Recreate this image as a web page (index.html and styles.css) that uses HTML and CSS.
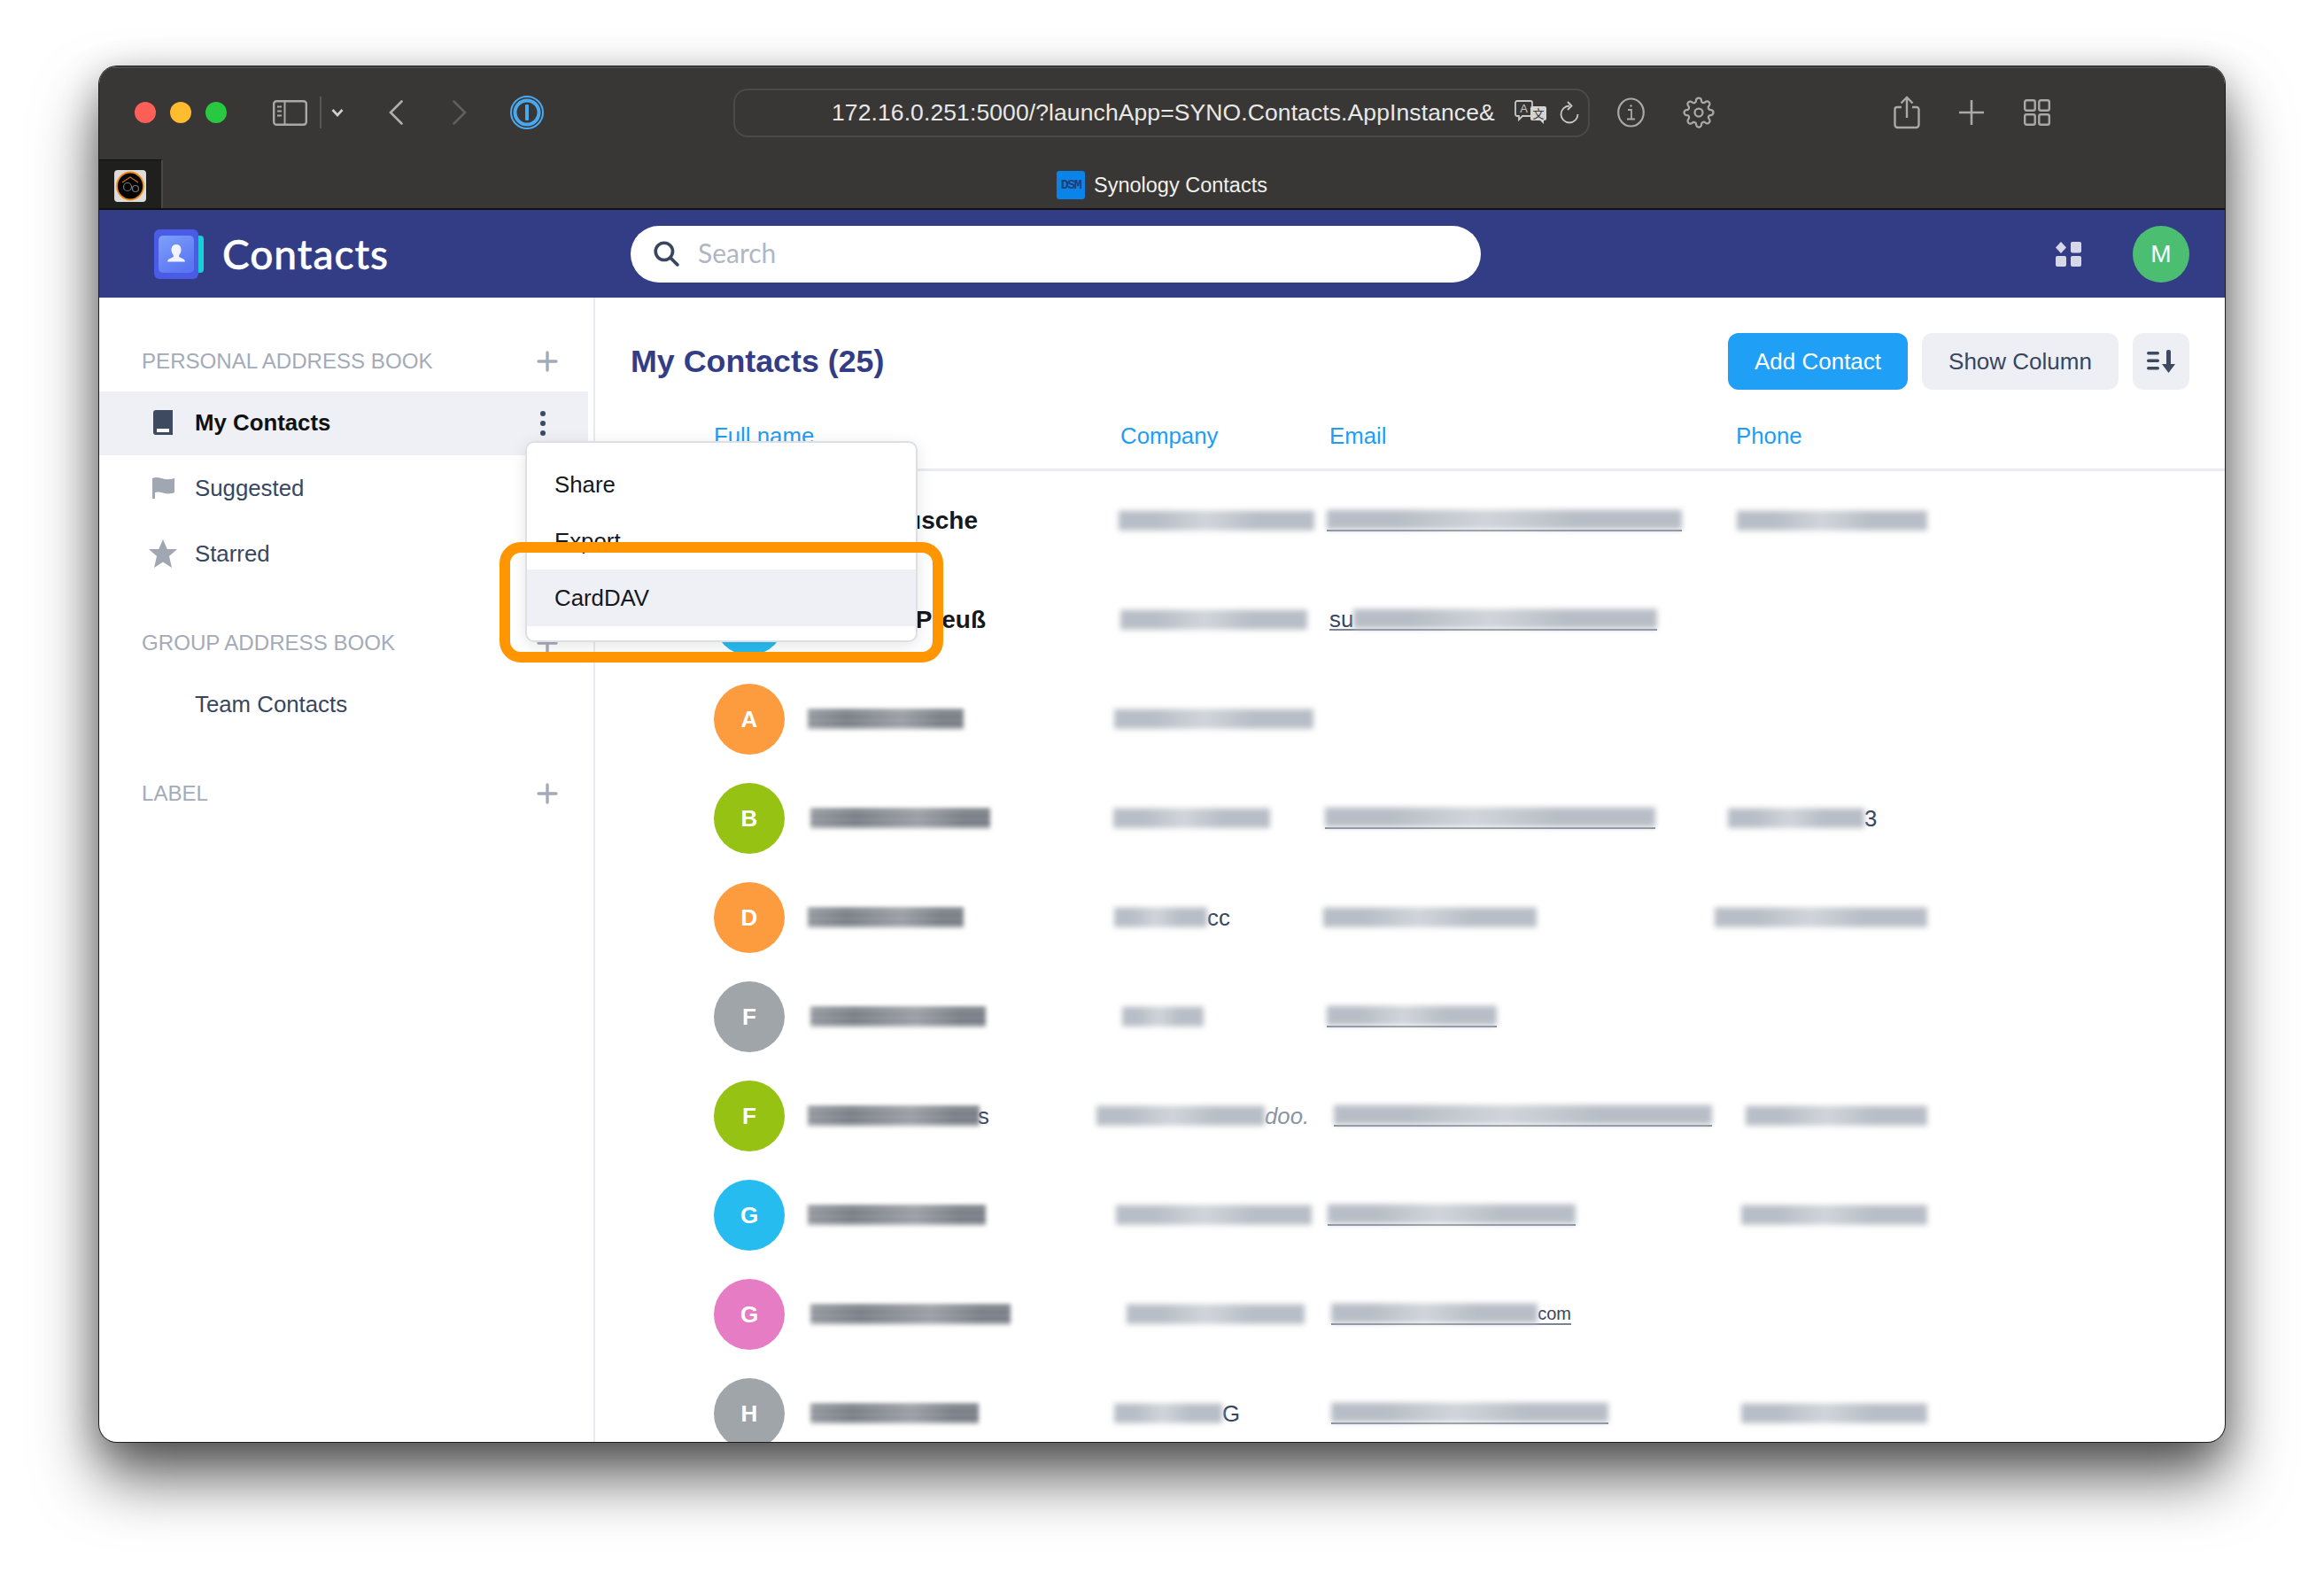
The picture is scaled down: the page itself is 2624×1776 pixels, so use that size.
FILE: index.html
```html
<!DOCTYPE html>
<html lang="en">
<head>
    <meta charset="UTF-8">
    <title>Synology Contacts</title>
    <link rel="stylesheet" href="styles.css">
</head>
<body>
    <div class="window">
        <div class="toolbar">
            <span class="light red"></span>
            <span class="light yellow"></span>
            <span class="light green"></span>

            <svg class="tb-sidebar" width="39" height="29" viewBox="0 0 39 29" fill="none" stroke="#a9a9a7" stroke-width="2.4">
                <rect x="1.2" y="1.2" width="36.6" height="26.6" rx="3"/>
                <path d="M13.5 1v27M5 7.5h5M5 12.5h5M5 17.5h5" stroke-width="2"/>
            </svg>
            <span class="tb-sep"></span>
            <svg class="tb-chevron" width="14" height="10" viewBox="0 0 14 10" fill="none" stroke="#d0d0ce" stroke-width="2.6">
                <path d="M1.5 2l5.5 6 5.5-6"/>
            </svg>
            <svg class="tb-back" width="16" height="28" viewBox="0 0 16 28" fill="none" stroke="#aeaeac" stroke-width="2.6" stroke-linecap="round">
                <path d="M14.5 1.5L2 14l12.5 12.5"/>
            </svg>
            <svg class="tb-forward" width="16" height="28" viewBox="0 0 16 28" fill="none" stroke="#5f5f5d" stroke-width="2.6" stroke-linecap="round">
                <path d="M1.5 1.5L14 14 1.5 26.5"/>
            </svg>
            <svg class="tb-onepass" width="38" height="38" viewBox="0 0 38 38">
                <circle cx="19" cy="19" r="18" fill="none" stroke="#4aa8ee" stroke-width="2"/>
                <circle cx="19" cy="19" r="13.5" fill="none" stroke="#4aa8ee" stroke-width="4"/>
                <rect x="17" y="10" width="4" height="18" rx="1" fill="#4aa8ee"/>
            </svg>

            <div class="urlbar">
                <span class="url">172.16.0.251:5000/?launchApp=SYNO.Contacts.AppInstance&amp;</span>
                <svg class="tb-translate" width="37" height="28" viewBox="0 0 37 28">
                    <path d="M3 1h15a2 2 0 0 1 2 2v13a2 2 0 0 1-2 2H9l-4 4v-4H3a2 2 0 0 1-2-2V3a2 2 0 0 1 2-2z" fill="#383735" stroke="#c8c8c6" stroke-width="1.8"/>
                    <text x="10.5" y="14" class="tr-latin">A</text>
                    <path d="M20 7h14a2 2 0 0 1 2 2v12a2 2 0 0 1-2 2h-1v4l-4-4h-9a2 2 0 0 1-2-2V9a2 2 0 0 1 2-2z" fill="#d4d4d2"/>
                    <text x="27" y="20" class="tr-cjk">文</text>
                </svg>
                <svg class="tb-reload" width="22" height="26" viewBox="0 0 22 26" fill="none" stroke="#c8c8c6" stroke-width="1.8">
                    <path d="M11 5.5a9.5 9.5 0 1 0 9.5 9.5"/>
                    <path d="M9 1l4.5 4.5L9 10"/>
                </svg>
            </div>

            <svg class="tb-info" width="31" height="34" viewBox="0 0 31 34" fill="none" stroke="#a9a9a7" stroke-width="2.2">
                <ellipse cx="15.5" cy="17" rx="14.3" ry="15.5"/>
                <path d="M12 14h4v10M11 24.5h9" stroke-width="1.8"/>
                <circle cx="15.5" cy="9.5" r="1.2" fill="#a9a9a7" stroke="none"/>
            </svg>
            <svg class="tb-gear" width="36" height="36" viewBox="0 0 24 24" fill="none" stroke="#a9a9a7" stroke-width="1.5">
                <circle cx="12" cy="12" r="3"/>
                <path d="M19.4 15a1.65 1.65 0 0 0 .33 1.82l.06.06a2 2 0 0 1 0 2.83 2 2 0 0 1-2.83 0l-.06-.06a1.65 1.65 0 0 0-1.82-.33 1.65 1.65 0 0 0-1 1.51V21a2 2 0 0 1-2 2 2 2 0 0 1-2-2v-.09A1.65 1.65 0 0 0 9 19.4a1.65 1.65 0 0 0-1.82.33l-.06.06a2 2 0 0 1-2.83 0 2 2 0 0 1 0-2.83l.06-.06a1.65 1.65 0 0 0 .33-1.82 1.65 1.65 0 0 0-1.51-1H3a2 2 0 0 1-2-2 2 2 0 0 1 2-2h.09A1.65 1.65 0 0 0 4.6 9a1.65 1.65 0 0 0-.33-1.82l-.06-.06a2 2 0 0 1 0-2.83 2 2 0 0 1 2.83 0l.06.06a1.65 1.65 0 0 0 1.82.33H9a1.65 1.65 0 0 0 1-1.51V3a2 2 0 0 1 2-2 2 2 0 0 1 2 2v.09a1.65 1.65 0 0 0 1 1.51 1.65 1.65 0 0 0 1.82-.33l.06-.06a2 2 0 0 1 2.83 0 2 2 0 0 1 0 2.83l-.06.06a1.65 1.65 0 0 0-.33 1.82V9a1.65 1.65 0 0 0 1.51 1H21a2 2 0 0 1 2 2 2 2 0 0 1-2 2h-.09a1.65 1.65 0 0 0-1.51 1z"/>
            </svg>
            <svg class="tb-share" width="30" height="38" viewBox="0 0 30 38" fill="none" stroke="#a9a9a7" stroke-width="2.4">
                <path d="M9 13H4a2.5 2.5 0 0 0-2.5 2.5V33A3 3 0 0 0 4.5 36h21a3 3 0 0 0 3-3V15.5A2.5 2.5 0 0 0 26 13h-5"/>
                <path d="M15 25V2M8.5 8.5L15 2l6.5 6.5"/>
            </svg>
            <svg class="tb-plus" width="28" height="28" viewBox="0 0 28 28" fill="none" stroke="#a9a9a7" stroke-width="2.6">
                <path d="M14 0v28M0 14h28"/>
            </svg>
            <svg class="tb-tabs" width="30" height="30" viewBox="0 0 30 30" fill="none" stroke="#a9a9a7" stroke-width="2.4">
                <rect x="1.2" y="1.2" width="11.5" height="11.5" rx="2"/>
                <rect x="17.3" y="1.2" width="11.5" height="11.5" rx="2"/>
                <rect x="1.2" y="17.3" width="11.5" height="11.5" rx="2"/>
                <rect x="17.3" y="17.3" width="11.5" height="11.5" rx="2"/>
            </svg>
        </div>

        <div class="tabbar">
            <div class="pinned-tab">
                <svg class="pinned-icon" width="36" height="36" viewBox="0 0 36 36">
                    <rect width="36" height="36" rx="4" fill="#dedcd8"/>
                    <ellipse cx="18" cy="18" rx="15" ry="15.5" fill="#050505" stroke="#f08a10" stroke-width="1.8"/>
                    <path d="M9 14l9-6 9 6" fill="none" stroke="#c06a18" stroke-width="1.2"/>
                    <circle cx="15" cy="19" r="4.5" fill="none" stroke="#777" stroke-width="1.2"/>
                    <circle cx="24" cy="21" r="3.5" fill="none" stroke="#777" stroke-width="1.2"/>
                </svg>
            </div>
            <div class="tab-title">
                <span class="dsm"><span class="dsm-text">DSM</span></span>
                <span>Synology Contacts</span>
            </div>
        </div>

        <header class="appbar">
            <div class="brand">
                <svg class="brand-logo" width="56" height="56" viewBox="0 0 56 56">
                    <defs>
                        <linearGradient id="logoFace" x1="0" y1="0" x2="0.6" y2="1">
                            <stop offset="0" stop-color="#7fa0fa"/>
                            <stop offset="1" stop-color="#5a76f2"/>
                        </linearGradient>
                    </defs>
                    <rect x="40" y="7" width="16" height="42" rx="4" fill="#19cfd6"/>
                    <rect width="50" height="56" rx="6" fill="#4a5ce6"/>
                    <rect x="5" y="7" width="40" height="42" rx="5" fill="url(#logoFace)"/>
                    <path d="M25 17c3.5 0 5.5 2.6 5.5 6 0 2.8-1.1 4.6-2.3 6v2c2 1.3 6.3 2 6.8 5.5H15c.5-3.5 4.800-4.200 6.800-5.500v-2c-1.200-1.400-2.300-3.200-2.300-6 0-3.400 2-6 5.500-6z" fill="#f2f5ff"/>
                </svg>
                <span class="brand-name">Contacts</span>
            </div>
            <div class="search">
                <svg width="30" height="30" viewBox="0 0 28 28" fill="none" stroke="#38465f" stroke-width="3.4" stroke-linecap="round">
                    <circle cx="12" cy="12" r="9"/>
                    <path d="M19 19l7 7"/>
                </svg>
                <span>Search</span>
            </div>
            <svg class="appbar-grid" width="31" height="28" viewBox="0 0 31 28" fill="#d6d8ea">
                <path d="M7 0l6 6.500-6 6.500-6-6.500z"/>
                <rect x="18" y="0" width="12" height="12.500" rx="2"/>
                <rect x="1" y="16" width="12" height="12" rx="2"/>
                <rect x="18" y="16" width="12" height="12" rx="2"/>
            </svg>
            <span class="user">M</span>
        </header>

        <div class="content">
            <aside class="sidebar">
                <div class="side-head">
                    <span>PERSONAL ADDRESS BOOK</span>
                    <svg class="side-plus" width="24" height="24" viewBox="0 0 24 24" fill="none" stroke="#a4abb8" stroke-width="3.4" stroke-linecap="round"><path d="M12 2v20M2 12h20"/></svg>
                </div>
                <div class="side-row selected">
                    <span class="side-icon">
                        <svg width="22" height="28" viewBox="0 0 22 28"><path d="M3 0h19v28H3a3 3 0 0 1-3-3V3a3 3 0 0 1 3-3z" fill="#3d4a60"/><rect x="4" y="21" width="14" height="4" fill="#fff"/></svg>
                    </span>
                    <span>My Contacts</span>
                    <span class="dots"><i></i><i></i><i></i></span>
                </div>
                <div class="side-row">
                    <span class="side-icon">
                        <svg width="25" height="24" viewBox="0 0 25 24" fill="#a0a6b2"><path d="M0 1c5-2 8-.5 12 .5s8 1 13-.5v16c-5 2-9 1.500-13 .5s-6-1.500-9-.5v6.500a1.500 1.500 0 0 1-3 0z"/></svg>
                    </span>
                    <span>Suggested</span>
                </div>
                <div class="side-row">
                    <span class="side-icon">
                        <svg width="32" height="32" viewBox="0 0 32 32" fill="#a0a6b2"><path d="M16 0l4.800 11H32l-9 8 3 13-10-6.500L6 32l3-13-9-8h11.200z"/></svg>
                    </span>
                    <span>Starred</span>
                </div>

                <div class="side-head">
                    <span>GROUP ADDRESS BOOK</span>
                    <svg class="side-plus" width="24" height="24" viewBox="0 0 24 24" fill="none" stroke="#a4abb8" stroke-width="3.4" stroke-linecap="round"><path d="M12 2v20M2 12h20"/></svg>
                </div>
                <div class="side-row">
                    <span class="side-icon"></span>
                    <span>Team Contacts</span>
                </div>

                <div class="side-head">
                    <span>LABEL</span>
                    <svg class="side-plus" width="24" height="24" viewBox="0 0 24 24" fill="none" stroke="#a4abb8" stroke-width="3.4" stroke-linecap="round"><path d="M12 2v20M2 12h20"/></svg>
                </div>
            </aside>

            <main class="main">
                <div class="main-head">
                    <h1>My Contacts (25)</h1>
                    <div class="actions">
                        <button class="btn primary" type="button">Add Contact</button>
                        <button class="btn" type="button">Show Column</button>
                        <button class="btn sort" type="button">
                            <svg width="33" height="26" viewBox="0 0 33 26" fill="#3d4a60">
                                <rect x="0" y="2" width="14" height="3.5" rx="1.7"/>
                                <rect x="0" y="10.5" width="14" height="3.5" rx="1.7"/>
                                <rect x="0" y="19" width="14" height="3.5" rx="1.7"/>
                                <rect x="22" y="0" width="5" height="18" rx="2"/>
                                <path d="M17 16h15l-7.5 10z"/>
                            </svg>
                        </button>
                    </div>
                </div>

                <div class="columns">
                    <span>Full name</span>
                    <span>Company</span>
                    <span>Email</span>
                    <span>Phone</span>
                </div>

                <div class="row">
                    <div class="person">
                        <span class="avatar cyan"></span>
                        <span class="name-end" style="width:190px">usche</span>
                    </div>
                    <div class="cell"><span class="smear" style="width:221px;margin-left:-2px"></span></div>
                    <div class="cell"><span class="mail" style="width:401px;margin-left:-3px"><span class="smear"></span></span></div>
                    <div class="cell"><span class="smear" style="width:215px;margin-left:1px"></span></div>
                </div>
                <div class="row">
                    <div class="person">
                        <span class="avatar cyan"></span>
                        <span class="name-end" style="width:199px">Preuß</span>
                    </div>
                    <div class="cell"><span class="smear" style="width:211px"></span></div>
                    <div class="cell"><span class="mail" style="width:370px"><span class="left-over">su</span><span class="smear"></span></span></div>
                    <div class="cell"></div>
                </div>
                <div class="row">
                    <div class="person">
                        <span class="avatar orange">A</span>
                        <span class="smear dark" style="width:176px;margin-left:-2px"></span>
                    </div>
                    <div class="cell"><span class="smear" style="width:225px;margin-left:-7px"></span></div>
                    <div class="cell"></div>
                    <div class="cell"></div>
                </div>
                <div class="row">
                    <div class="person">
                        <span class="avatar lime">B</span>
                        <span class="smear dark" style="width:203px;margin-left:1px"></span>
                    </div>
                    <div class="cell"><span class="smear" style="width:177px;margin-left:-8px"></span></div>
                    <div class="cell"><span class="mail" style="width:373px;margin-left:-5px"><span class="smear"></span></span></div>
                    <div class="cell"><span class="smear" style="width:154px;margin-left:-9px"></span><span class="left-over">3</span></div>
                </div>
                <div class="row">
                    <div class="person">
                        <span class="avatar orange">D</span>
                        <span class="smear dark" style="width:176px;margin-left:-2px"></span>
                    </div>
                    <div class="cell"><span class="smear" style="width:105px;margin-left:-7px"></span><span class="left-over">cc</span></div>
                    <div class="cell"><span class="smear" style="width:241px;margin-left:-7px"></span></div>
                    <div class="cell"><span class="smear" style="width:240px;margin-left:-24px"></span></div>
                </div>
                <div class="row">
                    <div class="person">
                        <span class="avatar gray">F</span>
                        <span class="smear dark" style="width:198px;margin-left:1px"></span>
                    </div>
                    <div class="cell"><span class="smear" style="width:92px;margin-left:2px"></span></div>
                    <div class="cell"><span class="mail" style="width:192px;margin-left:-3px"><span class="smear"></span></span></div>
                    <div class="cell"></div>
                </div>
                <div class="row">
                    <div class="person">
                        <span class="avatar lime">F</span>
                        <span class="smear dark" style="width:194px;margin-left:-2px"></span><span class="left-over tail">s</span>
                    </div>
                    <div class="cell"><span class="smear" style="width:190px;margin-left:-27px"></span><span class="left-over italic">doo.</span></div>
                    <div class="cell"><span class="mail" style="width:427px;margin-left:5px"><span class="smear"></span></span></div>
                    <div class="cell"><span class="smear" style="width:205px;margin-left:11px"></span></div>
                </div>
                <div class="row">
                    <div class="person">
                        <span class="avatar cyan">G</span>
                        <span class="smear dark" style="width:201px;margin-left:-2px"></span>
                    </div>
                    <div class="cell"><span class="smear" style="width:221px;margin-left:-5px"></span></div>
                    <div class="cell"><span class="mail" style="width:280px;margin-left:-2px"><span class="smear"></span></span></div>
                    <div class="cell"><span class="smear" style="width:210px;margin-left:6px"></span></div>
                </div>
                <div class="row">
                    <div class="person">
                        <span class="avatar pink">G</span>
                        <span class="smear dark" style="width:226px;margin-left:1px"></span>
                    </div>
                    <div class="cell"><span class="smear" style="width:201px;margin-left:7px"></span></div>
                    <div class="cell"><span class="mail" style="width:271px;margin-left:2px"><span class="smear"></span><span class="left-over small">com</span></span></div>
                    <div class="cell"></div>
                </div>
                <div class="row">
                    <div class="person">
                        <span class="avatar gray">H</span>
                        <span class="smear dark" style="width:190px;margin-left:1px"></span>
                    </div>
                    <div class="cell"><span class="smear" style="width:122px;margin-left:-7px"></span><span class="left-over">G</span></div>
                    <div class="cell"><span class="mail" style="width:313px;margin-left:2px"><span class="smear"></span></span></div>
                    <div class="cell"><span class="smear" style="width:210px;margin-left:6px"></span></div>
                </div>
            </main>
        </div>

        <div class="menu">
            <div class="menu-item">Share</div>
            <div class="menu-item">Export</div>
            <div class="menu-item hover">CardDAV</div>
        </div>
        <div class="callout"></div>
    </div>
</body>
</html>
```

FILE: styles.css
```css
* {
    box-sizing: border-box;
}

body {
    margin: 0;
    width: 2624px;
    height: 1776px;
    padding: 75px 112px 0 112px;
    background: #fff;
    overflow: hidden;
    font-family: "Liberation Sans", Arial, sans-serif;
    font-size: 25.8px;
    color: #38465f;
}

.window {
    position: relative;
    width: 2400px;
    height: 1553px;
    display: flex;
    flex-direction: column;
    border-radius: 20px;
    overflow: hidden;
    background: #fff;
    box-shadow: 0 0 0 1px #1d1d1d, 0 40px 70px rgba(0, 0, 0, 0.62), 0 10px 40px rgba(0, 0, 0, 0.25);
}

/* browser chrome */
.toolbar {
    height: 105px;
    flex: none;
    display: flex;
    align-items: center;
    padding: 0 0 3px 40px;
    background: #383735;
    border-top: 2px solid #4a4a48;
}

.light {
    width: 24px;
    height: 24px;
    border-radius: 50%;
    margin-right: 16px;
}

.red { background: #ff5f57; }
.yellow { background: #febc2e; }
.green { background: #28c840; }

.toolbar svg { flex: none; }

.tb-sidebar { margin-left: 36px; }

.tb-sep {
    width: 2px;
    height: 36px;
    margin-left: 14px;
    background: #565654;
}

.tb-chevron { margin-left: 11px; }
.tb-back { margin-left: 51px; }
.tb-forward { margin-left: 56px; }
.tb-onepass { margin-left: 49px; }

.urlbar {
    width: 967px;
    height: 55px;
    margin-left: 214px;
    padding-left: 109px;
    display: flex;
    align-items: center;
    flex: none;
    border: 2px solid #4a4a48;
    border-radius: 16px;
    color: #e8e8e6;
    font-size: 26.5px;
}

.url {
    width: 771px;
    white-space: nowrap;
    letter-spacing: 0.1px;
}

.tr-latin {
    font-size: 13px;
    fill: #c8c8c6;
    text-anchor: middle;
    font-family: "Liberation Sans", sans-serif;
}

.tr-cjk {
    font-size: 13px;
    fill: #383735;
    text-anchor: middle;
    font-family: "Noto Sans CJK SC", sans-serif;
}

.tb-reload { margin-left: 14px; }
.tb-info { margin-left: 31px; }
.tb-gear { margin-left: 43px; }
.tb-share { margin-left: 202px; }
.tb-plus { margin-left: 44px; }
.tb-tabs { margin-left: 45px; }

.tabbar {
    height: 57px;
    flex: none;
    display: flex;
    background: #383735;
    border-bottom: 2px solid #111;
}

.pinned-tab {
    width: 72px;
    padding: 11px 0 0 17px;
    background: #1f1f1e;
    border-top: 1px solid #111;
    border-right: 2px solid #484846;
}

.tab-title {
    flex: 1;
    padding: 3px 72px 0 0;
    display: flex;
    align-items: center;
    justify-content: center;
    gap: 10px;
    color: #f0f0ee;
    font-size: 23.5px;
}

.dsm {
    width: 32px;
    height: 32px;
    display: flex;
    align-items: center;
    justify-content: center;
    border-radius: 3px;
    background: #0a84e8;
}

.dsm-text {
    font-family: "Liberation Mono", monospace;
    font-size: 15px;
    font-weight: bold;
    letter-spacing: -1.5px;
    color: #1d3f72;
}

/* app header */
.appbar {
    height: 99px;
    flex: none;
    display: flex;
    align-items: center;
    padding-right: 40px;
    background: #323d85;
}

.brand {
    width: 600px;
    padding-left: 62px;
    display: flex;
    align-items: center;
    gap: 21px;
}

.brand-name {
    font-family: "Lato", sans-serif;
    font-size: 46px;
    font-weight: 500;
    letter-spacing: 1px;
    color: #fff;
    -webkit-text-stroke: 0.5px #fff;
}

.search {
    width: 960px;
    height: 64px;
    padding-left: 25px;
    display: flex;
    align-items: center;
    gap: 21px;
    border-radius: 32px;
    background: #fff;
    color: #b0b7c3;
    font-family: "Lato", sans-serif;
    font-size: 30px;
    line-height: 60px;
}

.search span { margin-top: -3px; }

.search svg { margin-top: -2px; }

.appbar-grid { margin-left: auto; }

.user {
    width: 64px;
    height: 64px;
    margin-left: 57px;
    display: flex;
    align-items: center;
    justify-content: center;
    border-radius: 50%;
    background: #4cbe72;
    color: #fff;
    font-size: 28px;
}

/* contacts app */
.content {
    flex: 1;
    min-height: 0;
    display: flex;
}

.sidebar {
    width: 560px;
    flex: none;
    padding-right: 6px;
    border-right: 2px solid #e8eaee;
}

.side-head {
    height: 70px;
    margin-top: 28px;
    padding: 1px 34px 0 48px;
    display: flex;
    align-items: center;
    justify-content: space-between;
    color: #a4abb8;
    font-size: 24.1px;
}

.side-head:first-child { margin-top: 36px; }

.side-row {
    height: 72px;
    margin-bottom: 2px;
    padding: 0 0 2px 56px;
    display: flex;
    align-items: center;
    position: relative;
}

.side-row:has(+ .side-head) { margin-bottom: 0; }

.side-row.selected {
    background: #eef0f5;
    color: #111;
    font-weight: bold;
}

.side-icon {
    width: 32px;
    margin-right: 20px;
    display: flex;
    justify-content: center;
}

.dots {
    position: absolute;
    left: 498px;
    top: 22px;
    display: flex;
    flex-direction: column;
    gap: 5px;
}

.dots i {
    width: 6px;
    height: 6px;
    border-radius: 50%;
    background: #3d4a60;
}

.main {
    flex: 1;
    min-width: 0;
}

.main-head {
    height: 104px;
    padding: 40px 40px 0 40px;
    display: flex;
    justify-content: space-between;
}

h1 {
    margin: 0;
    height: 64px;
    line-height: 64px;
    font-size: 35.8px;
    color: #323d85;
}

.actions {
    display: flex;
    gap: 16px;
}

.btn {
    width: 222px;
    height: 64px;
    padding: 0;
    border: 0;
    border-radius: 12px;
    background: #eeeff4;
    color: #38465f;
    font: inherit;
    font-size: 26px;
}

.btn.primary {
    width: 203px;
    background: #209ff6;
    color: #fff;
}

.btn.sort {
    width: 64px;
    padding-top: 6px;
}

.columns {
    height: 92px;
    padding: 34px 0 0 134px;
    display: grid;
    grid-template-columns: 459px 236px 459px 1fr;
    line-height: 36px;
    color: #1e9df5;
    border-bottom: 3px solid #ebecf1;
}

.row {
    height: 112px;
    padding-left: 134px;
    display: grid;
    grid-template-columns: 459px 236px 459px 1fr;
    align-items: center;
}

.person,
.cell {
    display: flex;
    align-items: center;
}

.person { gap: 28px; }

.avatar {
    width: 80px;
    height: 80px;
    flex: none;
    display: flex;
    align-items: center;
    justify-content: center;
    border-radius: 50%;
    color: #fff;
    font-size: 26px;
    font-weight: bold;
}

.orange { background: #fd9c3f; }
.lime { background: #95c213; }
.gray { background: #a0a5aa; }
.cyan { background: #27bcef; }
.pink { background: #e67cc3; }

.name-end {
    text-align: right;
    font-weight: bold;
    font-size: 28px;
    color: #15181f;
}

/* the names and addresses are smeared out in the original */
.smear {
    display: block;
    flex: none;
    height: 22px;
    filter: blur(3px);
    background:
        linear-gradient(90deg, transparent 20%, rgba(255, 255, 255, 0.35) 45%, transparent 70%),
        repeating-linear-gradient(#a6adb8 0 3px, #c6cbd2 3px 7px);
}

.smear.dark {
    filter: blur(2.5px);
    background:
        linear-gradient(90deg, rgba(255, 255, 255, 0.2), transparent 25%, rgba(255, 255, 255, 0.25) 60%, transparent 85%),
        repeating-linear-gradient(#50565f 0 3px, #a2a6ad 3px 7px);
}

.mail {
    display: flex;
    flex: none;
    align-items: center;
    height: 24px;
    border-bottom: 2px solid #7a8496;
}

.mail .smear { flex: 1; }

.left-over {
    flex: none;
    color: #38465f;
    line-height: 20px;
}

.left-over.tail { margin-left: -30px; }

.left-over.italic {
    font-style: italic;
    color: #8a94a3;
}

.left-over.small { font-size: 20px; }

/* overlays */
.menu {
    position: absolute;
    left: 481px;
    top: 423px;
    width: 443px;
    height: 227px;
    padding-top: 15px;
    background: #fff;
    border: 2px solid #dcdfe4;
    border-radius: 10px;
    box-shadow: 0 4px 18px rgba(0, 0, 0, 0.1);
    color: #15181f;
}

.menu-item {
    height: 64px;
    padding-left: 31px;
    display: flex;
    align-items: center;
}

.menu-item.hover { background: #eef0f5; }

.callout {
    position: absolute;
    left: 452px;
    top: 537px;
    width: 501px;
    height: 136px;
    border: 12px solid #ff9500;
    border-radius: 24px;
}
```
